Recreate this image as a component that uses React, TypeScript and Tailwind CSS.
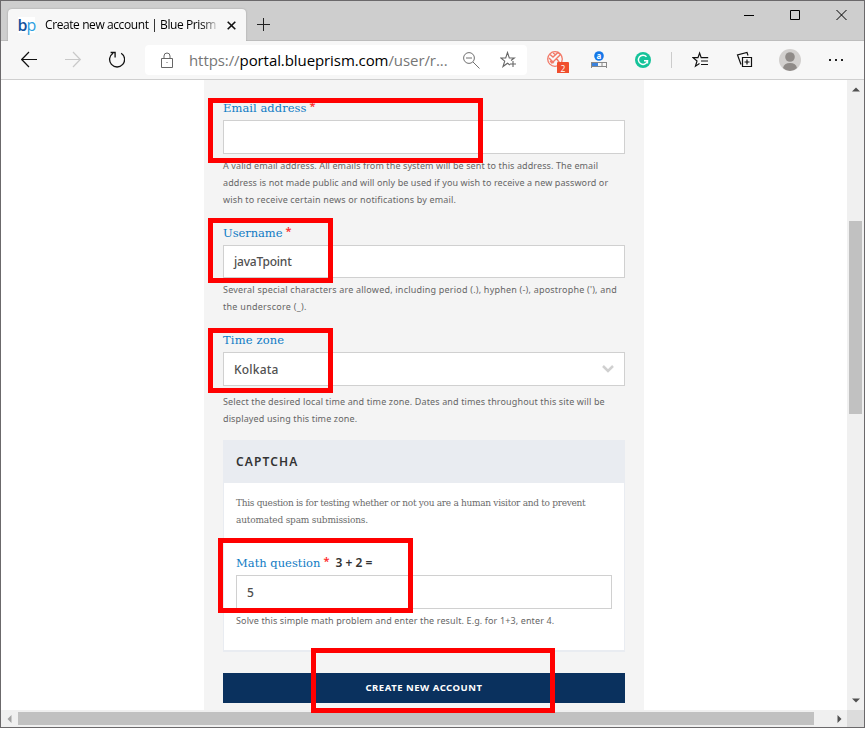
import type { ReactNode } from "react";

const SANS = "font-['Noto_Sans','Open_Sans',sans-serif]";
const SLAB = "font-['DejaVu_Serif',serif]";

function Star() {
  return <span className="ml-[3px] inline-block -translate-y-[2px] font-['Noto_Sans',sans-serif] text-[11px] font-semibold text-[#ff2a2a]">*</span>;
}

function Label({ children, className }: { children: ReactNode; className: string }) {
  return <div className={`flex h-4 items-center whitespace-pre leading-4 text-[#0f7bc4] text-[11.5px] ${SLAB} ${className}`}>{children}</div>;
}

function Help({ lines, className = "" }: { lines: [string, string][]; className?: string }) {
  return (
    <div className={`text-[9px] leading-[17px] text-[#666666] ${SANS} ${className}`}>
      {lines.map(([text, tracking]) => (
        <div key={text} className={`whitespace-nowrap ${tracking}`}>{text}</div>
      ))}
    </div>
  );
}

function Field({ children, className = "h-[34px]" }: { children?: ReactNode; className?: string }) {
  return (
    <div className={`flex items-center justify-between border border-[#d0d0d0] bg-white px-[10px] text-[12px] font-medium text-[#505050] ${SANS} ${className}`}>
      {children}
    </div>
  );
}

function TitleBar() {
  return (
    <div className="flex h-10 shrink-0 border-b border-[#bdbdbd] bg-[#cecece]">
      <div className="ml-[7px] mt-2 flex h-8 w-[238px] items-center rounded-t-[4px] bg-[#f7f7f7] pl-[10px] shadow-[0_0_2px_#9a9a9a] [clip-path:inset(-3px_-3px_0_-3px)]">
        <span className="flex h-4 w-[17px] items-center justify-center bg-white font-['Open_Sans',sans-serif] text-[16px] font-semibold leading-none tracking-[-0.8px]">
          <span className="text-[#15539e]">b</span><span className="font-normal text-[#2da0df]">p</span>
        </span>
        <span className="ml-[10px] w-[171px] overflow-hidden whitespace-nowrap bg-gradient-to-r from-black from-90% to-[#c4c4c4] bg-clip-text font-['Open_Sans',sans-serif] text-[12px] tracking-[-0.41px] text-transparent">
          Create new account | Blue Prism
        </span>
        <svg className="ml-[11px]" width="9" height="9" viewBox="0 0 9 9" stroke="#111" strokeWidth="1.6"><path d="M.7.7l7.6 7.6M8.3.7L.7 8.3" /></svg>
      </div>
      <svg className="ml-[11px] mt-[17px]" width="13" height="13" viewBox="0 0 13 13" stroke="#222"><path d="M6.5 0v13M0 6.5h13" /></svg>
      <div className="ml-auto mr-[17px] mt-2 flex h-3 items-center">
        <svg width="103" height="12" viewBox="0 0 103 12" fill="none" stroke="#000">
          <path d="M0 6.5h10M46.5 1.5h9v9h-9zM92.5 1l10 10M102.500 1l-10 10" />
        </svg>
      </div>
    </div>
  );
}

function Toolbar() {
  return (
    <div className="flex h-[39px] shrink-0 items-center border-b border-[#cfcfcf] bg-[#f7f7f7]">
      <svg className="ml-5" width="104" height="18" viewBox="0 0 104 18" fill="none">
        <path d="M16 8.500H.8M8 1L.7 8.500 8 16" stroke="#111" strokeWidth="1.200" />
        <path d="M44 8.500h15.200M52 1L59.300 8.500 52 16" stroke="#c9c9c9" strokeWidth="1.200" />
        <path d="M92 2.200a7.500 7.500 0 1 0 8.200 0M89.600 1.500h4.500v5" stroke="#111" strokeWidth="1.300" />
      </svg>
      <div className="ml-5 flex h-[30px] w-[382px] items-center rounded-[4px] bg-white pl-4">
        <svg width="12" height="17" viewBox="0 0 12 17" fill="none" stroke="#666"><path d="M.5 6.500h11v9H.5zM3 6.500V4a3 3 0 0 1 6 0v2.500" /><path d="M5.500 10.500h1" /></svg>
        <span className="ml-4 w-[265px] whitespace-nowrap font-['Open_Sans',sans-serif] text-[15px] tracking-[-0.08px] text-[#767676]">
          https://<span className="text-black">portal.blueprism.com</span>/user/r...
        </span>
        <svg className="ml-[9px]" width="17" height="17" viewBox="0 0 17 17" fill="none" stroke="#707070"><circle cx="6" cy="6" r="5.400" /><path d="M3 6h6M10 10l6.500 6.500" /></svg>
        <svg className="ml-5" width="17" height="18" viewBox="0 0 17 18" fill="none" stroke="#666" strokeWidth="1.100"><path d="M10 14l-2.500-1.800L3 15.500l1.700-5.400L.8 7h4.900L7.500 1.500 9.300 7h5L11 9.500M13 10v6M10 13h6" /></svg>
      </div>
      <svg className="ml-5" width="106" height="26" viewBox="0 0 106 26" fill="none">
        <circle cx="8" cy="12" r="7.300" stroke="#f27866" strokeWidth="1.300" />
        <path d="M3 7.500l3 2.500 5-4.500 2.500 2-4 4 3.500 5M3 14l2 2 6-6M2 11l5 5M6 6l3 2" stroke="#f27866" strokeWidth="1.400" />
        <rect x="10" y="15" width="12" height="12" rx="1" fill="#f04e2d" />
        <text x="16" y="24.500" textAnchor="middle" fill="white" fontFamily="Open Sans" fontSize="8.500">2</text>
        <circle cx="52" cy="9" r="4.800" fill="#1478e8" />
        <text x="52" y="11.700" textAnchor="middle" fill="white" fontFamily="Noto Sans" fontWeight="700" fontSize="8">a</text>
        <path d="M44.500 15v6M59.500 15v6M45 15.500h15M45 19.500h15M55 15v5" stroke="#888" />
        <path d="M45 16h6v3h-6z" fill="#3b82dc" />
        <circle cx="96" cy="13" r="8" fill="#15c39a" />
        <path d="M99.500 9.800a4.600 4.600 0 1 0 1 4H97M100.500 13.500v3" stroke="white" strokeWidth="1.400" />
      </svg>
      <div className="ml-[18px] h-4 w-px bg-[#cccccc]" />
      <svg className="ml-5" width="64" height="18" viewBox="0 0 64 18" fill="none" stroke="#111" strokeWidth="1.200">
        <path d="M7.500 12.500L3.500 15.200 5 10 1 6.600h5L7.600 2 9.200 6.600h7M9 10h7M9 13.500h7" />
        <path d="M49 13.500L45.500 4l9.500-2.500 1 3M50.500 6.500h9v9h-9zM55 8.500v5M52.500 11h5" />
      </svg>
      <svg className="ml-[23px]" width="22" height="22" viewBox="0 0 22 22">
        <circle cx="11" cy="11" r="11" fill="#d2d0ce" /><circle cx="11" cy="8" r="4.800" fill="#8f8b88" />
        <path d="M4 19q1-5 7-5t7 5q-3 3-7 3t-7-3z" fill="#8f8b88" />
      </svg>
      <svg className="ml-7" width="15" height="4" viewBox="0 0 15 4" fill="#222"><path d="M0 1h2v2H0zM6 1h2v2H6zM12 1h2v2h-2z" /></svg>
    </div>
  );
}

function AccountForm() {
  return (
    <div className="ml-[203px] h-[630px] w-[440px] bg-[#f4f4f4] px-[19px] pt-5">
      <Label className="tracking-[0.05px]">Email address<Star /></Label>
      <Field className="mt-1 h-[34px]" />
      <Help className="mt-[3px]" lines={[
        ["A valid email address. All emails from the system will be sent to this address. The email", "tracking-[0.105px]"],
        ["address is not made public and will only be used if you wish to receive a new password or", "tracking-[0.095px]"],
        ["wish to receive certain news or notifications by email.", "tracking-[0.15px]"],
      ]} />
      <Label className="mt-[17px] tracking-[-0.05px]">Username<Star /></Label>
      <Field className="mt-1 h-[33px] tracking-[-0.2px]">javaTpoint</Field>
      <Help className="mt-[3px]" lines={[
        ["Several special characters are allowed, including period (.), hyphen (-), apostrophe ('), and", "tracking-[0.21px]"],
        ["the underscore (_).", "tracking-[0.27px]"],
      ]} />
      <Label className="mt-[17px] tracking-[0.15px]">Time zone</Label>
      <Field className="mt-1 h-[34px] tracking-[0.2px]">
        <span className="pt-[2px]">Kolkata</span>
        <svg width="12" height="8" viewBox="0 0 12 8" fill="none" stroke="#d0d0d0" strokeWidth="2.500"><path d="M1 1l5 5 5-5" /></svg>
      </Field>
      <Help className="mt-[7px]" lines={[
        ["Select the desired local time and time zone. Dates and times throughout this site will be", "tracking-[0.14px]"],
        ["displayed using this time zone.", "tracking-[0.13px]"],
      ]} />
      <div className="mt-[13px] h-[212px] border border-b-2 border-[#e9ecf1] bg-white">
        <div className={`flex h-[42px] items-center bg-[#e9ecf1] pl-3 text-[12px] font-semibold tracking-[1.15px] text-[#333333] ${SANS}`}>CAPTCHA</div>
        <div className="px-3 pt-3">
          <div className={`whitespace-nowrap text-[9px] leading-[17px] text-[#6b6b6b] ${SLAB}`}>
            <div className="tracking-[-0.3px]">This question is for testing whether or not you are a human visitor and to prevent</div>
            <div className="tracking-[-0.2px]">automated spam submissions.</div>
          </div>
          <Label className="mt-[26px]">Math question<Star /><span className={`ml-[6px] text-[12px] font-semibold text-[#333333] ${SANS}`}>3 + 2 =</span></Label>
          <Field className="mt-1 h-[34px]"><span className="pt-[2px]">5</span></Field>
          <Help className="mt-[3px]" lines={[["Solve this simple math problem and enter the result. E.g. for 1+3, enter 4.", "tracking-[0.12px]"]]} />
        </div>
      </div>
      <div className={`mt-[21px] flex h-[30px] items-center justify-center bg-[#0a315e] text-[9.500px] font-bold tracking-[0.52px] text-white ${SANS}`}>CREATE NEW ACCOUNT</div>
    </div>
  );
}

export default function App() {
  return (
    <div className="h-[729px] w-[866px] overflow-hidden bg-white">
      <div className="relative flex h-[728px] w-[865px] flex-col border border-[#6b696b] bg-white">
        <TitleBar />
        <Toolbar />
        <div className="flex h-[630px]">
          <div className="w-[846px] overflow-hidden"><AccountForm /></div>
          <div className="flex w-[17px] flex-col items-center bg-[#f0f0f0]">
            <svg className="mt-[7px]" width="8" height="5" viewBox="0 0 8 5" fill="#505050"><path d="M0 4.500L4 .5l4 4z" /></svg>
            <div className="mt-[129px] h-[193px] w-[13px] bg-[#c1c1c1]" />
            <svg className="mt-auto mb-[7px]" width="8" height="5" viewBox="0 0 8 5" fill="#505050"><path d="M0 .5h8l-4 4z" /></svg>
          </div>
        </div>
        <div className="flex h-[17px] items-center bg-[#f0f0f0]">
          <svg className="ml-[6px]" width="5" height="8" viewBox="0 0 5 8" fill="#a3a3a3"><path d="M4.500 0v8l-4-4z" /></svg>
          <div className="ml-[6px] h-[13px] w-[796px] bg-[#c1c1c1]" />
          <svg className="ml-[23px]" width="5" height="8" viewBox="0 0 5 8" fill="#505050"><path d="M.5 0v8l4-4z" /></svg>
          <div className="ml-auto h-[17px] w-[17px] bg-[#dcdcdc]" />
        </div>
        <div className="absolute left-[207px] top-[97px] h-[65px] w-[275px] border-5 border-[#ff0000]" />
        <div className="absolute left-[207px] top-[217px] h-[65px] w-[125px] border-5 border-[#ff0000]" />
        <div className="absolute left-[207px] top-[327px] h-[65px] w-[125px] border-5 border-[#ff0000]" />
        <div className="absolute left-[217px] top-[537px] h-[75px] w-[195px] border-5 border-[#ff0000]" />
        <div className="absolute left-[310px] top-[647px] h-[65px] w-[244px] border-5 border-[#ff0000]" />
      </div>
    </div>
  );
}
